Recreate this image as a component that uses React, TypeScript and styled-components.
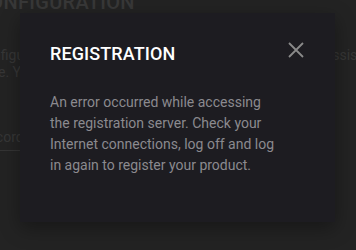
import React from "react";
import styled, { createGlobalStyle } from "styled-components";

const Global = createGlobalStyle`
  html, body { margin: 0; padding: 0; background: #2a2a2a; }
  body { font-family: Roboto, "Noto Sans", sans-serif; }
`;

const Page = styled.div`
  position: relative;
  width: 356px;
  height: 250px;
  overflow: hidden;
  background: #2a2a2a;
`;

const Content = styled.div`
  margin-left: -24px;
  width: 420px;
  display: flex;
  flex-direction: column;
`;

const PageTitle = styled.h1`
  margin: -10px 0 0 0;
  font-size: 20px;
  font-weight: 500;
  letter-spacing: 0.3px;
  color: #4a4a4a;
  line-height: 24px;
`;

const PageText = styled.p`
  margin: 33px 0 0 0;
  font-size: 14px;
  line-height: 17px;
  color: #474747;
  white-space: nowrap;
`;

const Section = styled.div`
  margin-top: 48px;
  padding-bottom: 4px;
  border-bottom: 1px solid #444444;
  width: 44px;
  font-size: 14px;
  line-height: 17px;
  color: #474747;
  white-space: nowrap;
  overflow: hidden;
`;

const Overlay = styled.div`
  position: absolute;
  inset: 0;
  background: rgba(24, 24, 24, 0.35);
`;

const Dialog = styled.div`
  position: absolute;
  left: 20px;
  top: 13px;
  width: 315px;
  height: 209px;
  box-sizing: border-box;
  background: #1d1c21;
  box-shadow: 0 6px 18px rgba(0, 0, 0, 0.35);
  padding: 30px 31px 0 30px;
  display: flex;
  flex-direction: column;
`;

const Header = styled.div`
  display: flex;
  align-items: flex-start;
  justify-content: space-between;
`;

const Title = styled.h2`
  margin: 0;
  font-size: 18px;
  font-weight: 500;
  letter-spacing: 0.1px;
  color: #ffffff;
  line-height: 22px;
`;

const Close = styled.button`
  border: 0;
  background: none;
  padding: 0;
  margin-top: -2px;
  width: 17px;
  height: 17px;
  display: flex;
  align-items: center;
  justify-content: center;
  cursor: pointer;
`;

const Body = styled.p`
  margin: 27px 0 0 0;
  font-size: 14px;
  line-height: 21px;
  color: #8b8a8f;
  width: 232px;
`;

export default function App() {
  return (
    <>
      <Global />
      <Page>
        <Content>
          <PageTitle>CONFIGURATION</PageTitle>
          <PageText>
            Configure the general settings of your product using the assistant.
            <br />
            Here. You can change these settings at any time.
          </PageText>
          <Section>Discord</Section>
        </Content>
        <Overlay />
        <Dialog role="dialog">
          <Header>
            <Title>REGISTRATION</Title>
            <Close aria-label="Close">
              <svg width="16" height="16" viewBox="0 0 16 16">
                <path d="M1 1 L15 15 M15 1 L1 15" stroke="#8a8a8a" strokeWidth="1.8" />
              </svg>
            </Close>
          </Header>
          <Body>
            An error occurred while accessing the registration server. Check
            your Internet connections, log off and log in again to register
            your product.
          </Body>
        </Dialog>
      </Page>
    </>
  );
}
